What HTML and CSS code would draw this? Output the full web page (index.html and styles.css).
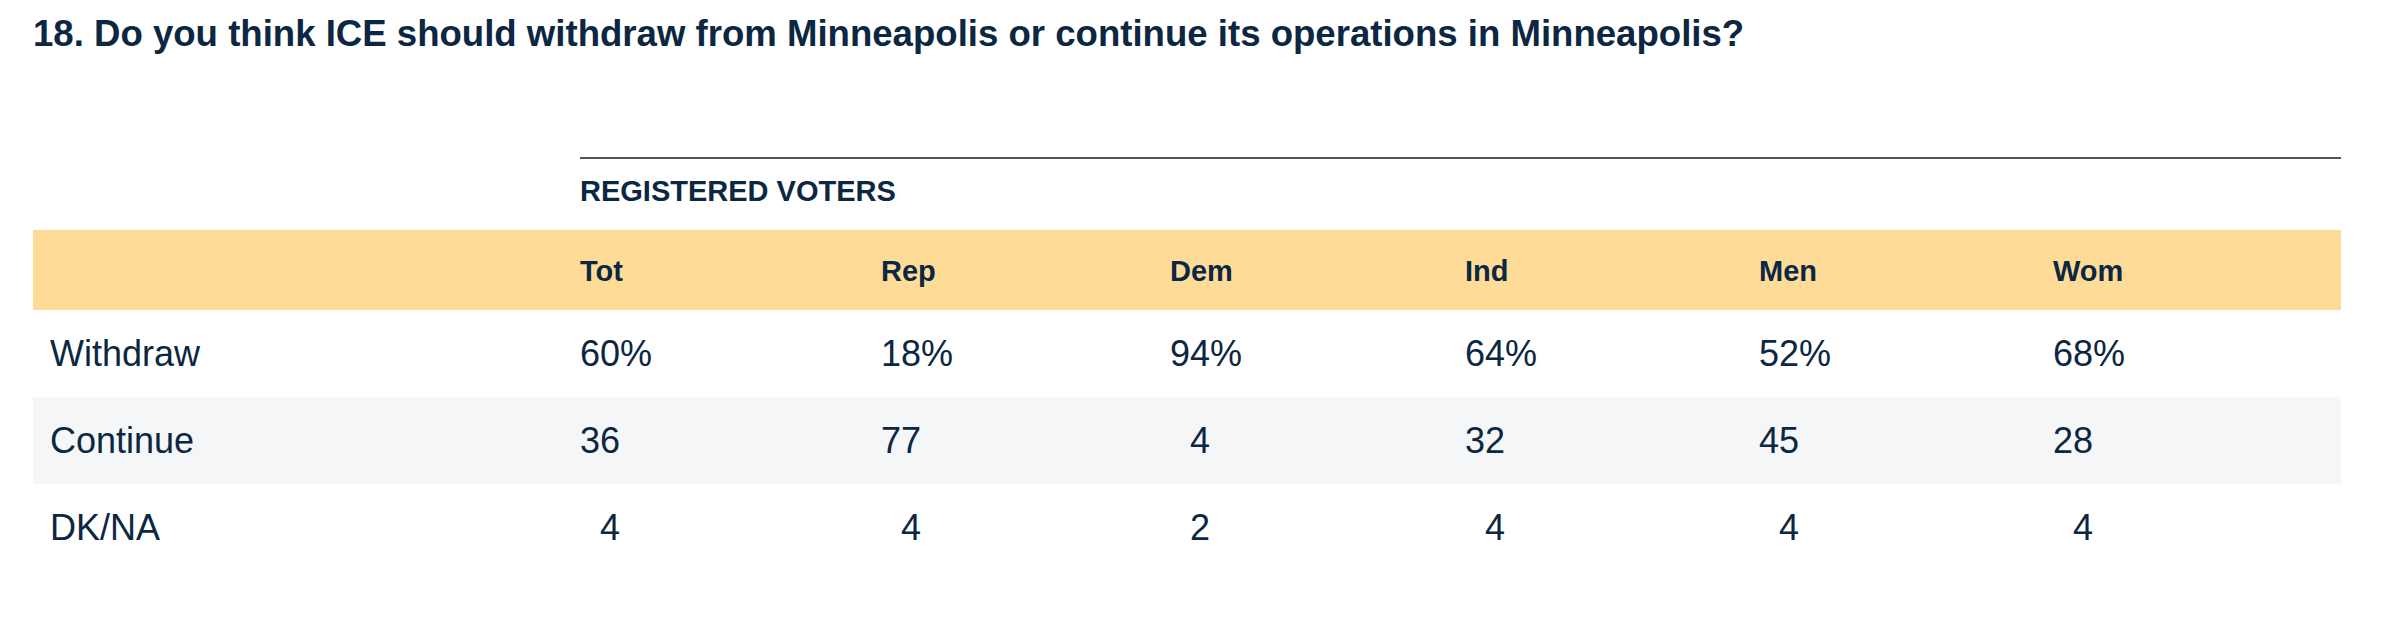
FILE: index.html
```html
<!DOCTYPE html>
<html lang="en">
<head>
<meta charset="utf-8">
<title>Poll question 18</title>
<link rel="stylesheet" href="styles.css">
</head>
<body>
<div class="page">
  <h1 class="title">18. Do you think ICE should withdraw from Minneapolis or continue its operations in Minneapolis?</h1>
  <div class="table">
    <div class="grid group">
      <div></div>
      <div class="group-label">REGISTERED VOTERS</div>
    </div>
    <div class="grid head">
      <div class="label"></div>
      <div class="cell">Tot</div>
      <div class="cell">Rep</div>
      <div class="cell">Dem</div>
      <div class="cell">Ind</div>
      <div class="cell">Men</div>
      <div class="cell">Wom</div>
    </div>
    <div class="grid row">
      <div class="label">Withdraw</div>
      <div class="cell">60%</div>
      <div class="cell">18%</div>
      <div class="cell">94%</div>
      <div class="cell">64%</div>
      <div class="cell">52%</div>
      <div class="cell">68%</div>
    </div>
    <div class="grid row alt">
      <div class="label">Continue</div>
      <div class="cell">36</div>
      <div class="cell">77</div>
      <div class="cell pad">4</div>
      <div class="cell">32</div>
      <div class="cell">45</div>
      <div class="cell">28</div>
    </div>
    <div class="grid row">
      <div class="label">DK/NA</div>
      <div class="cell pad">4</div>
      <div class="cell pad">4</div>
      <div class="cell pad">2</div>
      <div class="cell pad">4</div>
      <div class="cell pad">4</div>
      <div class="cell pad">4</div>
    </div>
  </div>
</div>
</body>
</html>
```

FILE: styles.css
```css
html, body {
  margin: 0;
  padding: 0;
  background: #ffffff;
}

body {
  font-family: "Liberation Sans", Arial, sans-serif;
  color: #0b2742;
}

.page {
  width: 2308px;
  padding: 12px 0 0 33px;
}

.title {
  margin: 0;
  font-size: 36.6px;
  line-height: 44px;
  font-weight: 700;
  color: #0b2742;
}

.table {
  margin-top: 101px;
}

.grid {
  display: grid;
  grid-template-columns: 547px 301px 289px 295px 294px 294px 1fr;
  align-items: center;
}

.group {
  margin-bottom: 22px;
}

.group-label {
  grid-column: 2 / -1;
  border-top: 2px solid #50575e;
  padding-top: 15px;
  font-size: 29px;
  line-height: 34px;
  font-weight: 700;
}

.head {
  height: 80px;
  background: #fedc97;
  font-size: 29px;
  font-weight: 700;
  padding-top: 2px;
  box-sizing: border-box;
}

.row {
  height: 87px;
  font-size: 36px;
}

.row.alt {
  background: #f5f6f8;
}

.label {
  padding-left: 17px;
}

.pad {
  padding-left: 1ch;
}
```
